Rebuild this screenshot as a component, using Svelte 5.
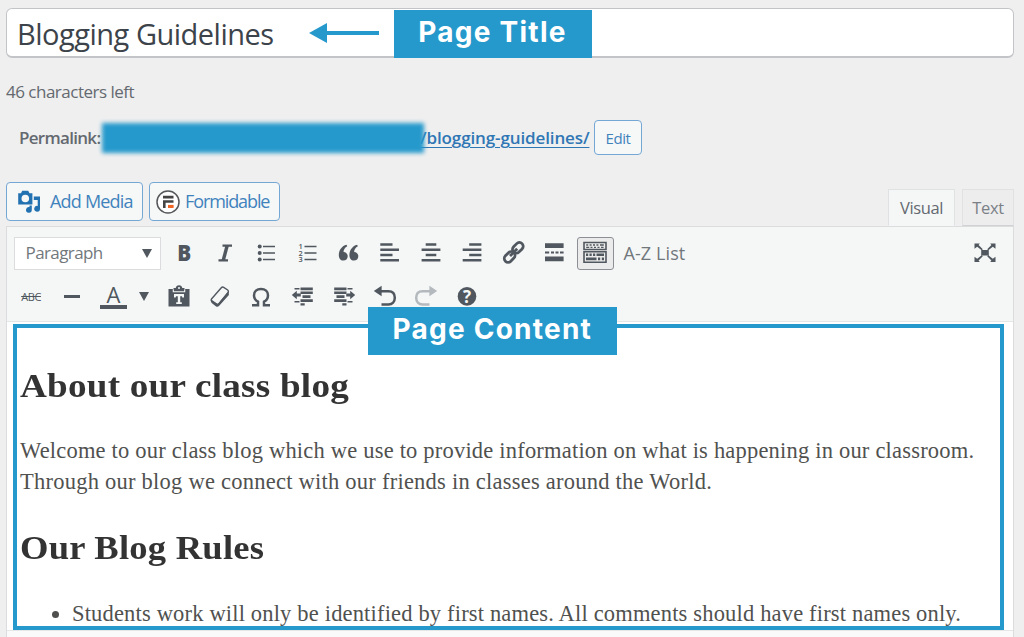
<script lang="ts">
  interface Tool {
    name: string;
    label: string;
    disabled?: boolean;
    active?: boolean;
  }

  const firstRow: Tool[] = [
    { name: 'bold', label: 'Bold' },
    { name: 'italic', label: 'Italic' },
    { name: 'bullets', label: 'Bulleted list' },
    { name: 'numbers', label: 'Numbered list' },
    { name: 'quote', label: 'Blockquote' },
    { name: 'left', label: 'Align left' },
    { name: 'center', label: 'Align center' },
    { name: 'right', label: 'Align right' },
    { name: 'link', label: 'Insert link' },
    { name: 'more', label: 'Read more' },
    { name: 'keyboard', label: 'Toolbar toggle', active: true },
  ];

  const secondRow: Tool[] = [
    { name: 'paste', label: 'Paste as text' },
    { name: 'eraser', label: 'Clear formatting' },
    { name: 'omega', label: 'Special character' },
    { name: 'outdent', label: 'Decrease indent' },
    { name: 'indent', label: 'Increase indent' },
    { name: 'undo', label: 'Undo' },
    { name: 'redo', label: 'Redo', disabled: true },
    { name: 'help', label: 'Keyboard shortcuts' },
  ];

  const sans = 'font-family="Open Sans, sans-serif"';

  const icons: Record<string, string> = {
    bold: `<text x="5.2" y="20.4" font-size="23.500" font-weight="800" ${sans} textLength="14" lengthAdjust="spacingAndGlyphs">B</text>`,
    italic: `<path d="M9.500 4.600h9.500M5.500 19.400h9.500" stroke="currentColor" stroke-width="2.200"/><path d="M14.200 4.500L10.200 19.500" stroke="currentColor" stroke-width="3.400"/>`,
    bullets: `<g><circle cx="5.700" cy="5.500" r="2"/><circle cx="5.700" cy="12" r="2"/><circle cx="5.700" cy="18.500" r="2"/><path d="M9 4.800h12v1.400H9zM9 11.300h12v1.400H9zM9 17.800h12v1.400H9z"/></g>`,
    numbers: `<g font-size="7.400" font-weight="600" ${sans}><text x="3.500" y="7.800">1</text><text x="3.500" y="14.500">2</text><text x="3.500" y="21.200">3</text></g><path d="M9.500 4.800H21.500v1.400H9.500zM9.500 11.300H21.500v1.400H9.500zM9.500 17.800H21.500v1.400H9.500z"/>`,
    quote: `<path d="M10.500 3.700C6 4.700 2.800 9 2.800 14c0 3.300 1.700 5.600 4.500 5.600 2.600 0 4.400-1.900 4.400-4.400 0-2.400-1.700-4.200-4.200-4.300.1-2.300 1.400-4.500 3.800-5.700z"/><path d="M21.100 3.700c-4.500 1-7.700 5.300-7.700 10.300 0 3.300 1.700 5.600 4.500 5.600 2.600 0 4.400-1.900 4.400-4.400 0-2.400-1.700-4.200-4.200-4.300.1-2.300 1.400-4.500 3.800-5.700z"/>`,
    left: `<path d="M2.300 2.300h12.200v2.500H2.300zM2.300 7.500H21V10H2.300zM2.300 12.800h12.200v2.500H2.300zM2.300 18H21v2.500H2.300z"/>`,
    center: `<path d="M6.700 2.300h10.600v2.500H6.700zM2.600 7.500h18.800V10H2.600zM6.700 12.800h10.600v2.500H6.700zM2.600 18h18.800v2.500H2.600z"/>`,
    right: `<path d="M9.200 2.300h12.200v2.500H9.200zM2.700 7.500h18.700V10H2.700zM9.200 12.800h12.200v2.500H9.200zM2.700 18h18.700v2.500H2.700z"/>`,
    link: `<g fill="none" stroke="currentColor" stroke-width="2.800"><rect x="-5.800" y="-3.800" width="12" height="7.600" rx="3.800" transform="translate(16.700 7) rotate(-45)"/><rect x="-6.200" y="-3.800" width="12" height="7.600" rx="3.800" transform="translate(8.800 15.800) rotate(-45)"/><path d="M9 15l7.200-7.200"/></g>`,
    more: `<path d="M3 2.300h18.600V7H3zM3 10.400h4.200v2.200H3zM9 10.400h3v2.200H9zM13.500 10.400h3v2.200h-3zM18 10.400h3.600v2.200H18zM3 15.400h18.600v4.800H3z"/>`,
    keyboard: `<path fill-rule="evenodd" d="M.2.700h23.600v8.600H.200zM1.800 2.200v5.600h20.400V2.200z"/><path fill-rule="evenodd" d="M.2 10h23.600v12H.200zM1.800 11.500v9h20.400v-9z"/><path d="M3.200 3.200h2v1.600h-2zM6.600 3.200h2v1.600h-2zM10 3.200h2v1.600h-2zM13.400 3.200h2v1.600h-2zM17 3.200h3.800v1.600H17zM3.200 5.700h3v1.400h-3zM7.500 5.700h2v1.400h-2zM11 5.700h2v1.400h-2zM14.500 5.700h2v1.400h-2zM18 5.700h2.600v1.400H18zM3 12.600h2.200V15H3zM6.500 12.600h2.200V15H6.500zM10 12.600h2.200V15H10zM13.500 12.600H21V15h-7.500zM3 16.600h10.500v2.600H3zM15 16.600h2.200v2.600H15zM18.800 16.600H21v2.600h-2.200z"/>`,
    paste: `<path d="M1.500 4h5V3h2.200c.3-1.700 1.300-2.800 3.300-2.800S15 1.300 15.300 3h2.200v1h5v17.500h-21z"/><path d="M6.300 4.300v2.500h11.400V4.300" fill="none" stroke="#f5f7f7" stroke-width="1.100"/><circle cx="12" cy="3" r="1" fill="#f5f7f7"/><path d="M7 8.900h10v3.600h-1.700l-.3-1.300h-1.800v6.100h1.600V19H9.200v-1.700h1.600v-6.100H9l-.3 1.300H7z" fill="#f5f7f7"/>`,
    eraser: `<path d="M3.700 13.700L13.300 2.700Q14.300 1.600 15.700 2.300l4 2.700q1.300 1 .4 2.400L11.500 18.200Q10 20.300 8 19L4 16.300Q2.500 15.200 3.700 13.700z" fill="none" stroke="currentColor" stroke-width="1.400"/><path d="M3.200 14.500l6.600 4.500L20.600 6l.3 4L11 21q-1.500 1.500-3.200.3L4 18.300q-1.600-1.200-.8-3.800z"/>`,
    omega: `<path d="M3 20.300h6v-3.600C6.400 15.300 5 13.100 5 10.200 5 6.400 7.800 4 12 4s7 2.400 7 6.200c0 2.900-1.400 5.100-4 6.500v3.600h6" fill="none" stroke="currentColor" stroke-width="2.500"/>`,
    outdent: `<path d="M9.500 2.500h12.300v2.700H9.500zM9.500 6.400h12.300v2.700H9.500zM11.500 10.300h8v2.700h-8zM9.500 14.200h12.300v2.700H9.500zM9.500 18.300h4.200v2.300H9.500zM3.500 3h5v1.400h-5zM3.500 16h5v1.400h-5zM.8 10l5-4.300v2.800h4v3h-4v2.800z"/>`,
    indent: `<path d="M2.200 2.500h12.300v2.700H2.200zM2.200 6.400h12.300v2.700H2.200zM4.500 10.300h8v2.700h-8zM2.200 14.200h12.300v2.700H2.200zM10.300 18.300h4.200v2.300h-4.200zM15.500 3h5v1.400h-5zM15.500 16h5v1.400h-5zM23.200 10l-5-4.300v2.800h-4v3h4v2.800z"/>`,
    undo: `<path d="M6 6.200h9.500c4 0 6.300 2.600 6.300 6.600s-2.500 6.600-6.300 6.600H8.500" fill="none" stroke="currentColor" stroke-width="2.500"/><path d="M.8 6L8.600.800v10.400z"/>`,
    redo: `<path d="M18 6.200H8.500C4.500 6.200 2.200 8.800 2.200 12.800s2.500 6.600 6.300 6.600h7" fill="none" stroke="currentColor" stroke-width="2.500"/><path d="M23.200 6L15.400.800v10.400z"/>`,
    help: `<circle cx="12" cy="11.400" r="9.300"/><text x="12" y="17.700" font-size="17" font-weight="700" text-anchor="middle" fill="#f5f7f7" ${sans}>?</text>`,
    fullscreen: `<path d="M8.200 9h7.600v5.600H8.200zM1.500 2.500h5.300L5.600 4l4.200 4.200-1.100 1.100L4.200 5.700 1.500 7.800zM22.500 2.500h-5.300L18.400 4l-4.200 4.200 1.100 1.100 4.500-3.600 2.700 2.100zM1.500 21h5.300l-1.200-1.500 4.200-4.200-1.100-1.100-4.500 3.600-2.700-2.100zM22.500 21h-5.300l1.200-1.500-4.200-4.200 1.100-1.100 4.500 3.600 2.700-2.100z"/>`,
    media: `<path fill-rule="evenodd" d="M1.200 3.200H4L5.200.800h6L12.500 3.200H15.400v11.300H1.200zM8.300 4.700a3.800 3.800 0 100 7.600 3.800 3.800 0 000-7.600z"/><path d="M16.800 6.500H23v12.200a2.900 2.900 0 11-2.300-2.800V10h-3.900zM14.800 15.500v4.300a2.900 2.900 0 11-2.300-2.800v-1.500z"/>`,
    formidable: `<circle cx="12" cy="12" r="11" fill="#fff" stroke="#55585a" stroke-width="1.500"/><path d="M7 5.800h10.500v2.800H7zM7 10.200h10.500v2.600H9.600v5.200H7z" fill="#444"/><path d="M12 14.900h5.600v3.100H12z" fill="#f26522"/>`,
  };

  const permalink = '/blogging-guidelines/';
  const title = 'Blogging Guidelines';
</script>

{#snippet icon(name: string)}
  <svg class="icon" viewBox="0 0 24 24" fill="currentColor" aria-hidden="true">{@html icons[name]}</svg>
{/snippet}

{#snippet tool(item: Tool)}
  <button class="tool" class:disabled={item.disabled} class:active={item.active} aria-label={item.label}>
    {@render icon(item.name)}
  </button>
{/snippet}

<main class="page">
  <div class="title-field">
    <span class="title-text">{title}</span>
    <svg class="arrow" viewBox="0 0 70 22" aria-hidden="true">
      <path d="M0 11L18 1v20z" />
      <path d="M16 9h54v4H16z" />
    </svg>
    <span class="callout callout-title">Page Title</span>
  </div>

  <p class="remaining">46 characters left</p>

  <div class="permalink">
    <strong class="permalink-label">Permalink:</strong>
    <span class="redacted"></span>
    <a class="slug" href="#slug">{permalink}</a>
    <button class="button edit">Edit</button>
  </div>

  <div class="media-row">
    <button class="button media">{@render icon('media')}<span>Add Media</span></button>
    <button class="button form">{@render icon('formidable')}<span>Formidable</span></button>
    <div class="tabs">
      <button class="tab current">Visual</button>
      <button class="tab">Text</button>
    </div>
  </div>

  <section class="editor">
    <div class="toolbar">
      <div class="row first">
        <button class="format"><span>Paragraph</span><i class="caret"></i></button>
        {#each firstRow as item}
          {@render tool(item)}
        {/each}
        <span class="az">A-Z List</span>
        <span class="expand">{@render icon('fullscreen')}</span>
      </div>
      <div class="row second">
        <button class="tool"><s class="strike">ABC</s></button>
        <button class="tool" aria-label="Horizontal line"><i class="rule"></i></button>
        <button class="tool color"><span class="letter">A</span><i class="caret"></i></button>
        {#each secondRow as item}
          {@render tool(item)}
        {/each}
      </div>
    </div>

    <div class="content-wrap">
      <article class="content">
        <h2 class="about">About our class blog</h2>
        <p>
          <span class="line">Welcome to our class blog which we use to provide information on what is happening in our classroom.</span>
          <span class="line second-line">Through our blog we connect with our friends in classes around the World.</span>
        </p>
        <h2 class="rules">Our Blog Rules</h2>
        <ul>
          <li>Students work will only be identified by first names. All comments should have first names only.</li>
        </ul>
      </article>
      <span class="callout callout-content">Page Content</span>
    </div>
    <div class="status"></div>
  </section>
</main>

<style>
  :global(body) {
    background: #efefef;
    overflow: hidden;
  }

  .page {
    box-sizing: border-box;
    width: 1024px;
    height: 637px;
    padding: 8px 10px 0 6px;
    overflow: hidden;
    color: #50575e;
    font-family: 'Open Sans', 'Noto Sans', sans-serif;
    font-size: 17px;
  }

  button {
    margin: 0;
    padding: 0;
    border: 0;
    background: none;
    color: inherit;
    font: inherit;
    letter-spacing: inherit;
  }

  .icon {
    display: block;
    width: 24px;
    height: 24px;
    flex: none;
    overflow: visible;
  }

  .title-field {
    position: relative;
    box-sizing: border-box;
    display: flex;
    align-items: center;
    height: 50px;
    padding-left: 10px;
    border: 1.5px solid #c3c4c7;
    border-bottom-width: 2px;
    border-radius: 6px;
    background: #fff;
  }

  .title-text {
    width: 292px;
    padding-top: 2px;
    color: #3c434a;
    font-size: 29px;
    letter-spacing: -0.5px;
    white-space: nowrap;
  }

  .arrow {
    width: 70px;
    height: 22px;
    margin-top: 1px;
    fill: #2699cc;
  }

  .callout {
    position: absolute;
    box-sizing: border-box;
    height: 48px;
    background: #2699cc;
    color: #fff;
    font-family: Inter, sans-serif;
    font-weight: 700;
    font-size: 28px;
    line-height: 44px;
    letter-spacing: 1.25px;
    text-align: center;
    white-space: nowrap;
  }

  .callout-title {
    top: 0.5px;
    left: 386.5px;
    width: 198px;
  }

  .callout-content {
    top: -15px;
    left: 361px;
    width: 248.5px;
  }

  .remaining {
    margin: 22px 0 0;
    color: #646970;
    line-height: 24px;
    letter-spacing: -0.5px;
  }

  .permalink {
    display: flex;
    align-items: center;
    height: 36px;
    margin-top: 15px;
    padding-left: 13px;
    white-space: nowrap;
  }

  .permalink-label {
    width: 83px;
    color: #646970;
    font-weight: 600;
    letter-spacing: -0.7px;
  }

  .redacted {
    width: 322px;
    height: 30px;
    margin-top: 2px;
    background: #2699cc;
    filter: blur(2.2px);
  }

  .slug {
    width: 174px;
    margin-left: -4px;
    color: #2f76b5;
    font-weight: 600;
    letter-spacing: -0.12px;
    text-decoration-thickness: 1px;
    text-underline-offset: 3px;
  }

  .button {
    box-sizing: border-box;
    display: flex;
    align-items: center;
    border: 1.5px solid #74a7d4;
    border-radius: 4px;
    background: #f6f7f7;
    color: #3f83bd;
    white-space: nowrap;
  }

  .edit {
    justify-content: center;
    width: 48px;
    height: 35px;
    margin-top: 1px;
    font-size: 15px;
    letter-spacing: -0.4px;
  }

  .media-row {
    display: flex;
    height: 44px;
    margin-top: 27px;
    font-size: 18px;
    letter-spacing: -0.8px;
  }

  .button span {
    padding-bottom: 1px;
  }

  .media {
    width: 137px;
    height: 39px;
    padding-left: 10px;
  }

  .media .icon {
    color: #2271b1;
  }

  .media span {
    margin-left: 9px;
  }

  .form {
    width: 131px;
    height: 39px;
    margin-left: 6px;
    padding-left: 6px;
    letter-spacing: -1.1px;
  }

  .form span {
    margin-left: 5px;
  }

  .tabs {
    display: flex;
    gap: 7px;
    height: 37px;
    margin: 7px 0 0 auto;
  }

  .tab {
    box-sizing: border-box;
    width: 52px;
    border: 1.5px solid #e0e1e2;
    border-bottom-color: #d0d1d2;
    background: #ededed;
    color: #7b8087;
    font-size: 16.5px;
    letter-spacing: -0.4px;
  }

  .current {
    width: 67px;
    border-bottom-color: #f5f7f7;
    background: #f5f7f7;
    color: #646970;
  }

  .editor {
    box-sizing: border-box;
    width: 1008px;
    border: 1.5px solid #dcdcde;
    border-bottom: 0;
    background: #fff;
  }

  .toolbar {
    box-sizing: border-box;
    height: 94.5px;
    padding-top: 4.5px;
    border-bottom: 1.5px solid #e5e6e6;
    background: #f5f7f7;
  }

  .row {
    display: flex;
    align-items: center;
    height: 43.5px;
  }

  .first {
    padding-left: 6.5px;
  }

  .second {
    padding-left: 3.5px;
  }

  .format {
    box-sizing: border-box;
    display: flex;
    align-items: center;
    justify-content: space-between;
    width: 147px;
    height: 33px;
    margin-right: 3px;
    padding: 0 8px 0 11px;
    border: 1px solid #dcdcde;
    background: #fff;
    color: #72777c;
    letter-spacing: -0.6px;
  }

  .format span {
    padding-bottom: 2px;
  }

  .caret {
    border: 5.5px solid transparent;
    border-top: 9px solid #50575e;
    border-bottom: 0;
  }

  .tool {
    box-sizing: border-box;
    display: flex;
    align-items: center;
    justify-content: center;
    width: 41.1px;
    height: 33px;
    flex: none;
  }

  .disabled {
    color: #b4b9be;
  }

  .active {
    width: 37px;
    margin-left: 2.5px;
    border: 1.5px solid #8c8f94;
    border-radius: 3px;
    background: #ebebeb;
  }

  .az {
    margin-left: 9.5px;
    padding-bottom: 1px;
    color: #72777c;
    font-size: 18px;
    letter-spacing: 0.1px;
  }

  .expand {
    margin: 0 16px 0 auto;
  }

  .strike {
    padding-bottom: 1px;
    font-size: 11px;
    letter-spacing: -0.4px;
  }

  .rule {
    width: 16px;
    height: 3px;
    background: #50575e;
  }

  .color {
    justify-content: flex-start;
    gap: 12px;
    width: 66px;
    padding-left: 7.5px;
  }

  .letter {
    box-sizing: border-box;
    width: 26.5px;
    height: 25px;
    border-bottom: 4px solid #50575e;
    font-size: 22px;
    font-weight: 500;
    line-height: 20px;
    text-align: center;
  }

  .content-wrap {
    position: relative;
    padding: 2px 9px 0 5.5px;
  }

  .content {
    box-sizing: border-box;
    height: 306px;
    padding: 38px 0 0 3.5px;
    border: 4px solid #2699cc;
    color: #50514f;
    font-family: 'Liberation Serif', serif;
    font-size: 22.5px;
    line-height: 31px;
    letter-spacing: 0.2px;
    white-space: nowrap;
  }

  h2 {
    margin: 0;
    color: #333;
    font-size: 33px;
    line-height: 40px;
    letter-spacing: 0.2px;
    transform-origin: left;
  }

  .content p {
    margin: 29px 0 31px;
  }

  .line {
    display: block;
  }

  .second-line {
    letter-spacing: 0.24px;
  }

  .about {
    transform: scaleX(1.126);
  }

  .rules {
    transform: scaleX(1.108);
  }

  ul {
    margin: 30px 0 0;
    padding-left: 52px;
    letter-spacing: 0.17px;
  }

  .status {
    height: 12px;
    border-top: 1px solid #e5e6e6;
    background: #fafafa;
  }
</style>
